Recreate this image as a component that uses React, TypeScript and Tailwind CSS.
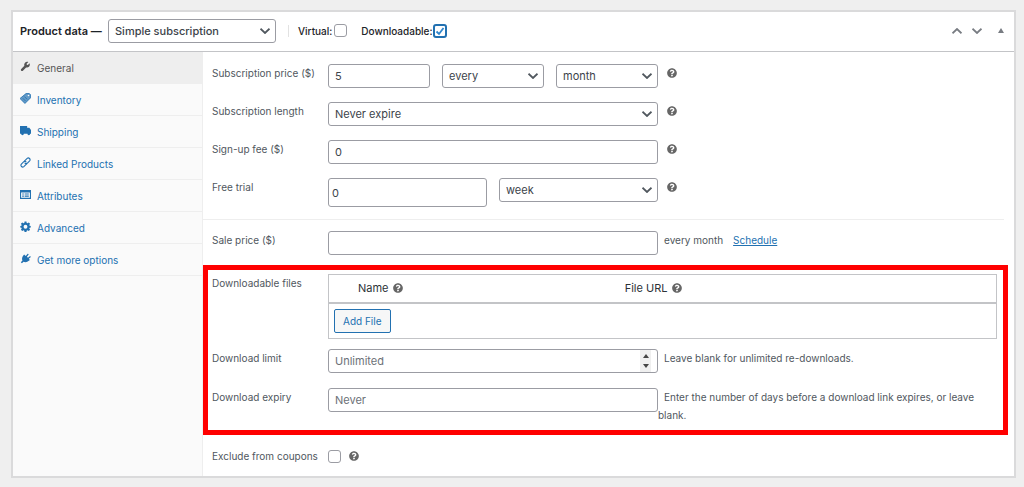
import type { ReactNode } from "react";
import clsx from "clsx";
import { FaQuestionCircle } from "react-icons/fa";

const rowClass =
  "grid grid-cols-[116px_minmax(0,330fr)_minmax(0,339fr)] items-start";
const fieldClass =
  "h-6 w-full min-w-0 rounded-[3px] border border-[#9b9ca3] bg-white px-1.5 text-[11px] text-[#3c434a] placeholder:text-[#6c7177]";

const tabs = [
  {
    name: "General",
    icon: (
      <path d="M17.4 4.2 14.2 7.4 12.4 6.9 12 5.2 15.2 2C13 1.100 10.400 1.600 8.800 3.500 7.500 5 7.400 7 8 8.700L2.200 14.500C1.300 15.400 1.300 16.800 2.200 17.600 3 18.500 4.400 18.500 5.300 17.600L11.100 11.700C12.900 12.300 14.900 11.900 16.300 10.500 18 8.800 18.300 6.300 17.400 4.200Z" />
    ),
  },
  {
    name: "Inventory",
    icon: (
      <>
        <path d="M11 1H17L19 3V9L9 19 0 10Z" opacity=".7" />
        <path
          d="M11 1H17L19 3V9L9 19 0 10ZM5 9.500 10 14.500M8 6.500 13 11.500"
          fill="none"
          stroke="currentColor"
          strokeWidth="1.5"
        />
        <circle cx="15.500" cy="4.500" r="1.5" fill="#fafafa" />
      </>
    ),
  },
  {
    name: "Shipping",
    icon: (
      <path d="M0 2H13V5H17L20 9V16H18.500A2.500 2.500 0 0 1 13.500 16H7A2.500 2.500 0 0 1 2 16H0Z" />
    ),
  },
  {
    name: "Linked Products",
    icon: (
      <g fill="none" stroke="currentColor" strokeWidth="2" strokeLinecap="round">
        <path d="M8 7.500 13 2.500A3.200 3.200 0 0 1 17.500 7L13.500 11A3.200 3.200 0 0 1 9 11" />
        <path d="M12 12.500 7 17.500A3.200 3.200 0 0 1 2.500 13L6.500 9A3.200 3.200 0 0 1 11 9" />
      </g>
    ),
  },
  {
    name: "Attributes",
    icon: (
      <path
        fillRule="evenodd"
        d="M0 2H20V18H0ZM2 6.500V16H18V6.500ZM4 8H7V10H4ZM8.500 8H16V10H8.500ZM4 12H7V14H4ZM8.500 12H16V14H8.500Z"
      />
    ),
  },
  {
    name: "Advanced",
    icon: (
      <path
        fillRule="evenodd"
        d="M8.300 1H11.700L12.200 3.500 13.700 4.100 15.900 2.700 18.300 5.100 16.900 7.300 17.500 8.800 19.500 9.200V11.800L17.500 12.200 16.900 13.700 18.300 15.900 15.900 18.300 13.700 16.900 12.200 17.500 11.700 20H8.300L7.800 17.500 6.300 16.900 4.100 18.300 1.700 15.900 3.100 13.700 2.500 12.200.500 11.800V9.200L2.500 8.800 3.100 7.300 1.700 5.100 4.100 2.700 6.300 4.100 7.800 3.500ZM10 7A3.500 3.500 0 1 0 10 14 3.500 3.500 0 1 0 10 7Z"
      />
    ),
  },
  {
    name: "Get more options",
    icon: (
      <path d="M10.500 5.500 13.500 1.700C14.500.600 16.300 2 15.400 3.200L12.600 7 14.500 8.800 17.800 6C19 5.100 20.300 6.700 19.200 7.700L16 10.500 18 12.500 14 15.500C11.500 17 8.500 17 6.500 15.800L3.500 18.800 1.500 17 4.500 13.800C3.300 11.500 3.500 8.500 5 6L7.500 2.500Z" />
    ),
  },
];

function Chevron({ up = false, className }: { up?: boolean; className?: string }) {
  return (
    <svg
      viewBox="0 0 10 6"
      className={clsx("h-1.5 w-2.5", className)}
      fill="none"
      stroke="currentColor"
      strokeWidth="1.8"
    >
      <path d={up ? "M.5 5.300 5 1 9.500 5.300" : "M.5.700 5 5 9.500.700"} />
    </svg>
  );
}

function Select({ id, value, label, className }: { id: string; value: string; label?: string; className?: string }) {
  return (
    <div className="relative min-w-0 flex-1">
      <select id={id} aria-label={label} className={clsx(fieldClass, "block appearance-none", className)}>
        <option>{value}</option>
      </select>
      <Chevron className="pointer-events-none absolute top-[9px] right-1.5 text-[#50575e]" />
    </div>
  );
}

function Help({ className }: { className?: string }) {
  return <FaQuestionCircle className={clsx("size-2.5 text-[#666]", className)} />;
}

function Row({ id, label, after, children }: { id: string; label: string; after?: ReactNode; children: ReactNode }) {
  return (
    <div className={rowClass}>
      <label htmlFor={id}>{label}</label>
      <div className="flex items-start gap-3">{children}</div>
      {after}
    </div>
  );
}

const rowHelp = <Help className="mt-1 ml-[9px]" />;

export default function App() {
  return (
    <div className="min-h-screen bg-[#efefef] pt-2.5 pr-2 pb-[9px] pl-[11px] font-['Inter',sans-serif] text-[10px] leading-[18px] text-[#50575e]">
      <div className="border-2 border-[#dadadb] bg-white">
        <header className="flex h-10 items-center border-b border-[#c3c4c7] pr-2.5 pb-0.5 pl-[7px] text-[#1d2327]">
          <h2 className="w-[88px] text-[11px] font-semibold whitespace-nowrap">Product data —</h2>
          <div className="flex w-[168px]">
            <Select id="product-type" label="Product type" value="Simple subscription" className="font-medium" />
          </div>
          <span className="mr-[9px] ml-3 h-3 w-px bg-[#e2e2e2]" />
          <label className="flex items-center gap-0.5 font-medium">
            Virtual:
            <input type="checkbox" className="size-[13px] appearance-none rounded-[3px] border border-[#9b9ca3] bg-white" />
          </label>
          <label className="ml-3.5 flex items-center font-medium">
            Downloadable:
            <span className="relative flex">
              <input
                type="checkbox"
                defaultChecked
                className="size-3.5 appearance-none rounded-[3px] border-2 border-[#2271b1] bg-white"
              />
              <svg viewBox="0 0 14 14" className="pointer-events-none absolute inset-0" fill="none" stroke="#2f86cc" strokeWidth="1.8">
                <path d="M3.500 7.500 6 10 10.500 4" />
              </svg>
            </span>
          </label>
          <div className="ml-auto flex items-center text-[#787c82]">
            <button type="button" aria-label="Move up">
              <Chevron up />
            </button>
            <button type="button" aria-label="Move down" className="ml-2.5">
              <Chevron />
            </button>
            <button type="button" aria-label="Toggle panel" className="ml-4">
              <svg viewBox="0 0 6 5" className="h-[5px] w-1.5" fill="currentColor">
                <path d="M3 0 6 5H0Z" />
              </svg>
            </button>
          </div>
        </header>

        <div className="flex">
          <nav className="w-[190px] shrink-0 border-r border-[#eee] bg-[#fafafa]">
            <ul>
              {tabs.map((tab, i) => (
                <li key={tab.name}>
                  <a
                    href="#"
                    className={clsx(
                      "flex h-8 items-center gap-1.5 border-b border-[#eee] pl-[7px] text-[10px]",
                      i === 0 ? "bg-[#eee] text-[#555]" : "text-[#2271b1]",
                    )}
                  >
                    <svg viewBox="0 0 20 20" className="mb-0.5 size-[11px]" fill="currentColor">
                      {tab.icon}
                    </svg>
                    {tab.name}
                  </a>
                </li>
              ))}
            </ul>
          </nav>

          <div className="min-w-0 flex-1 pt-3 pb-[11px]">
            <div className="flex flex-col gap-3.5 pr-[17px] pl-[9px]">
              <Row id="price" label="Subscription price ($)" after={rowHelp}>
                <div className="min-w-0 flex-1">
                  <input id="price" type="text" defaultValue="5" className={clsx(fieldClass, "block")} />
                </div>
                <Select id="interval" label="Billing interval" value="every" />
                <Select id="period" label="Billing period" value="month" />
              </Row>
              <Row id="length" label="Subscription length" after={rowHelp}>
                <Select id="length" value="Never expire" />
              </Row>
              <Row id="signup-fee" label="Sign-up fee ($)" after={rowHelp}>
                <input id="signup-fee" type="text" defaultValue="0" className={fieldClass} />
              </Row>
              <Row id="trial" label="Free trial" after={rowHelp}>
                <div className="min-w-0 flex-1">
                  <input
                    id="trial"
                    type="text"
                    defaultValue="0"
                    className="block h-[29px] w-full rounded-[3px] border border-[#9b9ca3] px-[3px] text-[11px] text-[#3c434a]"
                  />
                </div>
                <Select id="trial-period" label="Trial period" value="week" />
              </Row>
            </div>

            <hr className="mt-3 mr-2.5 mb-[11px] border-[#eee]" />

            <div className="pr-[17px] pl-[9px]">
              <Row
                id="sale-price"
                label="Sale price ($)"
                after={
                  <p className="pl-1.5">
                    every month
                    <a href="#" className="ml-2.5 text-[#2271b1] underline">
                      Schedule
                    </a>
                  </p>
                }
              >
                <input id="sale-price" type="text" className={fieldClass} />
              </Row>
            </div>

            {/* downloads */}
            <section className="mt-2.5 mr-1.5 border-5 border-[#f00] pt-1 pr-1.5 pb-1.5 pl-1">
              <div className="flex items-start">
                <span className="w-[116px] shrink-0">Downloadable files</span>
                <table className="w-full border border-[#c3c4c7] text-[11px] text-[#2c3338]">
                  <thead>
                    <tr className="h-7 border-b-2 border-[#c3c4c7] text-left">
                      <th className="w-2/5 pl-[29px] font-normal">
                        <span className="flex items-center gap-1">
                          Name <Help />
                        </span>
                      </th>
                      <th className="pl-[29px] font-normal">
                        <span className="flex items-center gap-1">
                          File URL <Help />
                        </span>
                      </th>
                    </tr>
                  </thead>
                  <tbody>
                    <tr className="h-9">
                      <td colSpan={2} className="pl-[5px]">
                        <button
                          type="button"
                          className="block h-6 rounded-[2px] border border-[#2271b1] bg-[#f6f7f7] px-2 text-[10px] text-[#2271b1]"
                        >
                          Add File
                        </button>
                      </td>
                    </tr>
                  </tbody>
                </table>
              </div>

              <div className="mt-2.5 flex flex-col gap-[15px]">
                <Row
                  id="limit"
                  label="Download limit"
                  after={<p className="indent-1.5">Leave blank for unlimited re-downloads.</p>}
                >
                  <div className="flex h-6 w-full overflow-hidden rounded-[3px] border border-[#9b9ca3] bg-white pr-1.5">
                    <input
                      id="limit"
                      type="number"
                      placeholder="Unlimited"
                      className="min-w-0 flex-1 px-1.5 text-[11px] [appearance:textfield] placeholder:text-[#6c7177]"
                    />
                    <span className="flex w-[11px] flex-col items-center justify-center gap-1.5 bg-[#efefef] text-[#444]">
                      <svg viewBox="0 0 6 4" className="h-1 w-1.5" fill="currentColor">
                        <path d="M3 0 6 4H0Z" />
                      </svg>
                      <svg viewBox="0 0 6 4" className="h-1 w-1.5" fill="currentColor">
                        <path d="M0 0H6L3 4Z" />
                      </svg>
                    </span>
                  </div>
                </Row>
                <Row
                  id="expiry"
                  label="Download expiry"
                  after={
                    <p className="indent-1.5">
                      Enter the number of days before a download link expires, or leave blank.
                    </p>
                  }
                >
                  <input id="expiry" type="text" placeholder="Never" className={fieldClass} />
                </Row>
              </div>
            </section>

            <div className="mt-3 pr-[17px] pl-[9px]">
              <Row id="coupons" label="Exclude from coupons">
                <div className="flex h-[18px] items-center gap-2">
                  <input
                    id="coupons"
                    type="checkbox"
                    className="size-[13px] appearance-none rounded-[3px] border border-[#9b9ca3] bg-white"
                  />
                  <Help />
                </div>
              </Row>
            </div>
          </div>
        </div>
      </div>
    </div>
  );
}
